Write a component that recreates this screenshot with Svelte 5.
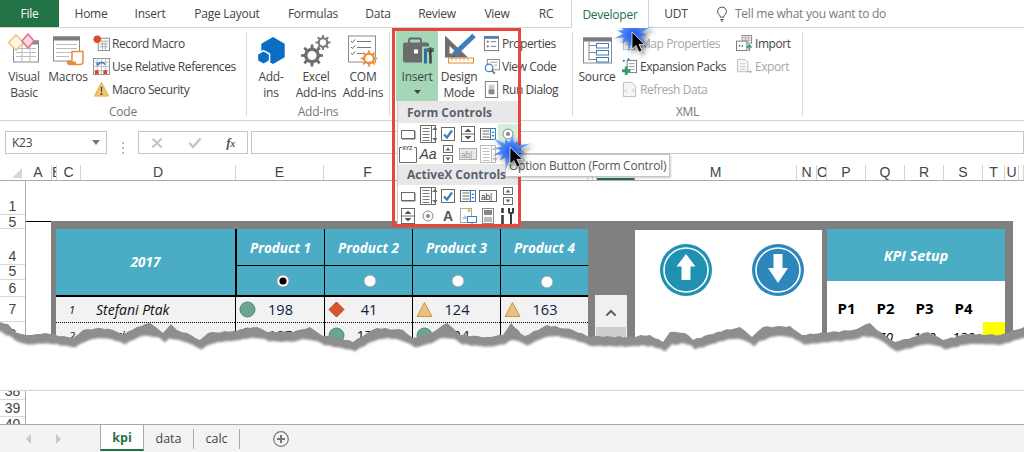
<script>
  const tabs = [
    ['Home', 64], ['Insert', 54], ['Page Layout', 100], ['Formulas', 72], ['Data', 58],
    ['Review', 60], ['View', 60], ['RC', 38]
  ];
  const cols = [
    ['A', 27], ['B', 5], ['C', 24], ['D', 155], ['E', 88], ['F', 88], ['G', 88], ['H', 88],
    ['', 5], ['', 4], ['', 38], ['M', 162], ['N', 20], ['O', 10], ['P', 39], ['Q', 39],
    ['R', 39], ['S', 39], ['T', 22], ['U', 14], ['', 5]
  ];
  const topRows = [
    ['1', 34, ''], ['5', 14, 'clip'], ['4', 36, ''], ['5', 15, ''], ['6', 17, 'mid'], ['7', 25, 'mid'], ['8', 26, 'mid']
  ];
  const radios = [
    { x: 4, y: 0, on: true }, { x: 3, y: 1, on: false }, { x: 2, y: 1, on: false }, { x: 5, y: 3, on: false }
  ];
  const data = [
    { n: 1, name: 'Stefani Ptak', v: [['c', 198], ['d', 41], ['t', 124], ['t', 163]] },
    { n: 2, name: 'Marisa Lopez', v: [['c', 195], ['c', 173], ['c', 224], ['c', 176]] }
  ];
  const kpi = [110, 70, 120, 120];

  function gear(cx, cy, r, teeth = 8, hole = 0.42) {
    const pts = [];
    const step = (Math.PI * 2) / teeth;
    for (let i = 0; i < teeth; i++) {
      const a = i * step;
      const ro = r, ri = r * 0.72, w = step * 0.2;
      [[a - w * 1.25, ri], [a - w * 0.75, ro], [a + w * 0.75, ro], [a + w * 1.25, ri]].forEach(([t, q]) => {
        pts.push(`${(cx + q * Math.cos(t)).toFixed(2)} ${(cy + q * Math.sin(t)).toFixed(2)}`);
      });
    }
    const h = r * hole;
    return `M${pts.join('L')}Z M${cx - h} ${cy}a${h} ${h} 0 1 0 ${h * 2} 0a${h} ${h} 0 1 0 ${-h * 2} 0Z`;
  }
  function hex(cx, cy, r) {
    const p = [];
    for (let i = 0; i < 6; i++) {
      const a = Math.PI / 6 + (i * Math.PI) / 3;
      p.push(`${(cx + r * Math.cos(a)).toFixed(2)},${(cy + r * Math.sin(a)).toFixed(2)}`);
    }
    return p.join(' ');
  }
  const spikes = [22, 9, 15, 9, 20, 9, 14, 9, 23, 9, 16, 9, 19, 9, 15, 9, 23, 9, 14, 9, 18, 9, 14, 9];
  const burst = spikes
    .map((r, i) => {
      const a = (i / spikes.length) * Math.PI * 2 - 0.35;
      return `${(26 + r * Math.cos(a)).toFixed(1)},${(26 + r * 0.85 * Math.sin(a)).toFixed(1)}`;
    })
    .join(' ');

  const edge = [[0,322],[8,324],[15,332],[26,335],[37,334],[45,333],[50,334],[73,338],[83,330],[100,328],[113,330],[123,335],[137,327],[150,323],[157,328],[163,333],[171,324],[177,330],[187,333],[200,340],[208,333],[233,331],[257,327],[267,332],[293,332],[310,327],[317,332],[323,336],[340,338],[353,342],[367,333],[377,328],[403,330],[413,338],[433,332],[447,323],[453,328],[460,335],[487,337],[503,335],[511,323],[517,330],[525,336],[547,325],[573,330],[587,336],[627,337],[650,335],[663,342],[670,332],[685,333],[693,340],[717,332],[740,327],[752,337],[763,327],[790,326],[802,335],[830,332],[853,330],[870,323],[877,330],[895,342],[913,337],[928,332],[943,340],[967,334],[1000,335],[1024,327]];
  const rough = [];
  edge.forEach(([x, y], i) => {
    rough.push([x, y]);
    const nxt = edge[i + 1];
    if (!nxt) return;
    const n = Math.floor((nxt[0] - x) / 4);
    for (let k = 1; k < n; k++) {
      const t = k / n;
      const j = Math.sin(x * 1.7 + k * 2.3) * 0.7;
      rough.push([x + (nxt[0] - x) * t, y + (nxt[1] - y) * t + j]);
    }
  });
  const topEdge = rough.map(([x, y]) => `${x.toFixed(1)},${(y - 320).toFixed(1)}`).join(' ');
  const shadowPts = `${topEdge} 1024,71 0,71`;
  const whitePts = rough
    .map(([x, y], i) => {
      const prev = rough[Math.max(0, i - 2)][1];
      const next = rough[Math.min(rough.length - 1, i + 2)][1];
      return `${(x + 2).toFixed(1)},${(Math.max(y, (prev + y + next) / 3) - 320 + 9.5).toFixed(1)}`;
    })
    .join(' ');
  const whiteShape = `-2,10 ${whitePts} 1026,14 1026,71 -2,71`;
</script>

{#snippet tri(x, y, up, c = '#666')}
  <path d={up ? `M${x} ${y + 3}l3 -3l3 3z` : `M${x} ${y}h6l-3 3z`} fill={c} />
{/snippet}
{#snippet btnIcon()}
  <svg viewBox="0 0 18 18"><rect x="2.500" y="5.500" width="13" height="8" fill="#fff" stroke="#6a6a6a" /><path d="M3 14h13V6" fill="none" stroke="#6a6a6a" /></svg>
{/snippet}
{#snippet comboIcon(c = '#6a6a6a')}
  <svg viewBox="0 0 18 18"><rect x="1.500" y="0.500" width="15" height="17" fill="#fff" stroke={c} /><path d="M12.500 1v16" stroke={c} /><path d="M3.500 3.500h7M3.500 6.500h7M3.500 9.500h7M3.500 12.500h7M3.500 15.500h7" stroke={c} stroke-width="0.900" />{@render tri(13, 2, true, c)}{@render tri(13, 13, false, c)}</svg>
{/snippet}
{#snippet checkIcon()}
  <svg viewBox="0 0 18 18"><rect x="2.500" y="2.500" width="13" height="13" fill="#fff" stroke="#6a6a6a" /><path d="M5 9.500l3 3 5-7" fill="none" stroke="#3f7dba" stroke-width="2.200" /></svg>
{/snippet}
{#snippet spinIcon()}
  <svg viewBox="0 0 18 18"><rect x="2.500" y="1.500" width="13" height="15" fill="#fff" stroke="#6a6a6a" /><path d="M3 9h12" stroke="#6a6a6a" /><path d="M5.500 7l3.500-3.500L12.500 7zM5.500 11l3.500 3.500L12.500 11z" fill="#555" /></svg>
{/snippet}
{#snippet listIcon()}
  <svg viewBox="0 0 18 18"><rect x="1.500" y="3.500" width="15" height="11" fill="#fff" stroke="#6a6a6a" /><path d="M3.500 6h7M3.500 9h7M3.500 12h7" stroke="#6a6a6a" /><rect x="11.500" y="3.500" width="5" height="11" fill="#fff" stroke="#3f7dba" /><path d="M12.500 8l1.500-2 1.500 2zM12.500 10l1.500 2 1.500-2z" fill="#3f7dba" /></svg>
{/snippet}
{#snippet optIcon(c = '#8a8a8a')}
  <svg viewBox="0 0 18 18"><circle cx="9" cy="9" r="5" fill="#fff" stroke={c} /><circle cx="9" cy="9" r="2" fill={c} /></svg>
{/snippet}
{#snippet scrollIcon()}
  <svg viewBox="0 0 18 18"><rect x="4.500" y="0.500" width="9" height="7" fill="#fff" stroke="#6a6a6a" /><rect x="4.500" y="10.500" width="9" height="7" fill="#fff" stroke="#6a6a6a" /><path d="M6.500 5.500l2.500-3 2.500 3zM6.500 12.500l2.500 3 2.500-3z" fill="#666" /></svg>
{/snippet}
{#snippet abIcon(dim)}
  <svg viewBox="0 0 18 18"><rect x="0.500" y="3.500" width="17" height="11" fill={dim ? '#e8e8e8' : '#fff'} stroke={dim ? '#aaa' : '#6a6a6a'} /><text x="2" y="12.500" class="ab" fill={dim ? '#999' : '#333'}>ab|</text></svg>
{/snippet}

<div class="page">
  <nav class="tabs">
    <div class="tab file">File</div>
    {#each tabs as [label, w]}
      <div class="tab" style="width:{w}px">{label}</div>
    {/each}
    <div class="tab dev">Developer</div>
    <div class="tab udt">UDT</div>
    <div class="tell">
      <svg width="12" height="16" viewBox="0 0 12 16"><path d="M6 1a4.500 4.500 0 0 0-2.500 8.200c.6.500.8 1 .9 2h3.200c.1-1 .3-1.500.9-2A4.500 4.500 0 0 0 6 1zM4.300 13.500h3.400M4.800 15h2.400" fill="none" stroke="#555" /></svg>
      <span>Tell me what you want to do</span>
    </div>
  </nav>

  <section class="ribbon">
    <div class="group g-code">
      <div class="btns">
        <div class="big w48">
          <svg class="ico" viewBox="0 0 40 36">
            <rect x="9.500" y="8.500" width="25" height="21" fill="#fff" stroke="#8a8a8a" />
            <rect x="9" y="8" width="26" height="4" fill="#8a8a8a" />
            <path d="M12 16h20M12 20h20M12 24h20M18 12v17M26 12v17" stroke="#bcbcbc" />
            <path d="M12 2.500l7.500 7.500-7.500 7.500L4.500 10z" fill="#fff7e6" stroke="#efc67f" stroke-width="1.600" />
            <path d="M24 1.500l6 7-6 7-6-7z" fill="#fbdbe0" stroke="#e4738a" stroke-width="1.600" />
          </svg>
          <span>Visual</span><span>Basic</span>
        </div>
        <div class="big w40">
          <svg class="ico" viewBox="0 0 40 36">
            <rect x="5.500" y="4.500" width="26" height="24" fill="#fff" stroke="#8a8a8a" />
            <rect x="5" y="4" width="27" height="4" fill="#7c7c7c" />
            <path d="M8 12h21M8 16h21M8 20h21M8 24h13" stroke="#bdbdbd" />
            <path d="M24 19h11v10c0 2-1.500 3-3 3H22c-2 0-2.500-2-2.500-3H24z" fill="#fff" stroke="#e58b3d" stroke-width="1.500" />
            <path d="M20 29h8v3h-6c-1 0-2-1-2-3z" fill="#e58b3d" />
          </svg>
          <span>Macros</span>
        </div>
        <div class="smalls s-code">
          <div class="item">
            <svg viewBox="0 0 18 18"><rect x="5.500" y="3.500" width="12" height="13" fill="#fff" stroke="#888" /><path d="M5 6.500h13M7 9.500h9M7 12.500h9M10 7v9M13 7v9" stroke="#aaa" /><circle cx="4.500" cy="4.500" r="4" fill="#d6502b" /></svg>
            <span>Record Macro</span>
          </div>
          <div class="item">
            <svg viewBox="0 0 18 18"><rect x="0.500" y="0.500" width="17" height="17" fill="#fff" stroke="#888" /><path d="M0 4.500h18M0 9h18M0 13.500h18M4.500 0v18M9 0v18M13.500 0v18" stroke="#bbb" /><path d="M5 7c2-3 6-3 8 0" fill="none" stroke="#3f7dba" stroke-width="1.600" /><path d="M3.500 4.500l.5 4 3.500-1.500z" fill="#3f7dba" /><rect x="2" y="13" width="4" height="4" fill="#cf4a2c" /><rect x="11" y="13" width="4" height="4" fill="#cf4a2c" /></svg>
            <span>Use Relative References</span>
          </div>
          <div class="item">
            <svg viewBox="0 0 18 18"><path d="M9 1.500L16.500 16h-15z" fill="#f2c36b" stroke="#e6a84a" /><path d="M8.200 6h1.600l-.3 6h-1zM8.100 13h1.800v1.800H8.100z" fill="#444" /></svg>
            <span>Macro Security</span>
          </div>
        </div>
      </div>
      <div class="glabel">Code</div>
    </div>

    <div class="group g-add">
      <div class="btns">
        <div class="big w48">
          <svg class="ico" viewBox="0 0 40 36">
            <polygon points={hex(22, 18, 13.500)} fill="#0b6cc4" />
            <polygon points={hex(12.500, 25, 7)} fill="#0b6cc4" stroke="#fff" stroke-width="1.500" />
          </svg>
          <span>Add-</span><span>ins</span>
        </div>
        <div class="big w42">
          <svg class="ico" viewBox="0 0 40 36">
            <path d={gear(16, 23, 11)} fill="#6e6e6e" fill-rule="evenodd" />
            <path d={gear(27, 10, 7.500)} fill="#7a7a7a" fill-rule="evenodd" />
          </svg>
          <span>Excel</span><span>Add-ins</span>
        </div>
        <div class="big w52">
          <svg class="ico" viewBox="0 0 40 36">
            <rect x="5.500" y="3.500" width="27" height="26" fill="#fff" stroke="#8a8a8a" />
            <path d="M8 8.500l1.500 1.500 2.500-3M8 14.500l1.500 1.500 2.500-3M8 20.500l1.500 1.500 2.500-3" fill="none" stroke="#666" />
            <path d="M14 9h14M14 15h14M14 21h7" stroke="#777" />
            <path d={gear(26, 26, 8.500)} fill="#e88a2d" fill-rule="evenodd" stroke="#fff" stroke-width="0.500" />
          </svg>
          <span>COM</span><span>Add-ins</span>
        </div>
      </div>
      <div class="glabel">Add-ins</div>
    </div>

    <div class="group g-ctl">
      <div class="btns">
        <div class="big w42 active">
          <svg class="ico" viewBox="0 0 40 36">
            <path d="M12 11V7.500c0-1 .5-1.500 1.500-1.500h9c1 0 1.500.5 1.500 1.500V11" fill="none" stroke="#666" stroke-width="1.800" />
            <rect x="6" y="10" width="26" height="20" rx="2" fill="#6b6b6b" />
            <rect x="17" y="17" width="4" height="4" fill="#fff" />
            <rect x="25" y="14" width="11" height="20" fill="#a3d7b5" />
            <path d="M28.500 16v5M28.500 21v10" stroke="#2a6fa8" stroke-width="3" />
            <path d="M33.500 15v5c0 1-.5 1.500-1 2M33.500 22v9" fill="none" stroke="#3d3d3d" stroke-width="2.400" />
            <path d="M31 15.500v3h5v-3" fill="none" stroke="#3d3d3d" stroke-width="1.300" />
          </svg>
          <span>Insert</span>
          <svg class="caret" width="7" height="4" viewBox="0 0 7 4"><path d="M0 0h7L3.500 4z" fill="#444" /></svg>
        </div>
        <div class="big w42">
          <svg class="ico" viewBox="0 0 40 36">
            <path d="M6 3l23 22H6z M10.500 13.500V21h8z" fill="#6f6f6f" fill-rule="evenodd" />
            <path d="M35 3L15 22" stroke="#3f7fb7" stroke-width="5" />
            <path d="M15 22l-2.500 3 3.500-.8" fill="#555" />
            <rect x="9.500" y="25.500" width="25" height="5" fill="#fff" stroke="#e38b33" />
            <path d="M13 26v2M17 26v2M21 26v2M25 26v2M29 26v2" stroke="#e38b33" />
          </svg>
          <span>Design</span><span>Mode</span>
        </div>
        <div class="smalls s-ctl">
          <div class="item">
            <svg viewBox="0 0 18 18"><rect x="1.500" y="1.500" width="15" height="15" fill="#fff" stroke="#777" /><path d="M1.500 3h15" stroke="#3f7dba" stroke-width="2" /><rect x="4" y="6" width="2" height="2" fill="#777" /><rect x="4" y="11" width="2" height="2" fill="#777" /><path d="M8 7h6M8 12h6" stroke="#777" /></svg>
            <span>Properties</span>
          </div>
          <div class="item">
            <svg viewBox="0 0 18 18"><rect x="4.500" y="1.500" width="13" height="11" fill="#fff" stroke="#888" /><path d="M8 4.500h7M12 7.500h3" stroke="#999" /><circle cx="6.500" cy="10.500" r="4" fill="#fff" stroke="#3f7dba" stroke-width="1.300" /><path d="M9.500 13.500l3 3" stroke="#666" stroke-width="1.800" /></svg>
            <span>View Code</span>
          </div>
          <div class="item">
            <svg viewBox="0 0 18 18"><rect x="2.500" y="0.500" width="13" height="17" fill="#fff" stroke="#777" /><rect x="6" y="4" width="6" height="10" fill="#ccc" /><rect x="6" y="9" width="6" height="5" fill="#888" /></svg>
            <span>Run Dialog</span>
          </div>
        </div>
      </div>
      <div class="glabel"> </div>
    </div>

    <div class="group g-xml">
      <div class="btns">
        <div class="big w48">
          <svg class="ico" viewBox="0 0 40 36">
            <rect x="6.500" y="5.500" width="28" height="25" fill="#fff" stroke="#8a8a8a" />
            <rect x="6" y="5" width="29" height="4" fill="#7c7c7c" />
            <path d="M12 9v19M12 13h7M12 20h7M12 27h7" stroke="#8a8a8a" />
            <rect x="19.500" y="11" width="12" height="4.500" fill="#fff" stroke="#3f7dba" />
            <rect x="19.500" y="18" width="12" height="4.500" fill="#fff" stroke="#3f7dba" />
            <rect x="19.500" y="25" width="12" height="4.500" fill="#fff" stroke="#3f7dba" />
          </svg>
          <span>Source</span>
        </div>
        <div class="smalls s-xml1">
          <div class="item dim">
            <svg viewBox="0 0 18 18"><rect x="2.500" y="3.500" width="12" height="12" fill="#eee" stroke="#bbb" /><path d="M5 7h7M5 10h7" stroke="#bbb" /></svg>
            <span>Map Properties</span>
          </div>
          <div class="item">
            <svg viewBox="0 0 18 18"><rect x="6.500" y="2.500" width="10" height="13" fill="#fff" stroke="#777" /><path d="M8.500 6h6M8.500 9h6M8.500 12h6" stroke="#999" /><circle cx="3" cy="3" r="1.200" fill="#3f7dba" /><circle cx="8" cy="1.500" r="1.200" fill="#3f7dba" /><path d="M4 9h3v3h3v3H7v3H4v-3H1v-3h3z" fill="#3a9a6a" /></svg>
            <span>Expansion Packs</span>
          </div>
          <div class="item dim">
            <svg viewBox="0 0 18 18"><path d="M2.500 1.500h9l4 4v11h-13z" fill="#f5f5f5" stroke="#bbb" /><path d="M6 8l-2 2 2 2M12 8l2 2-2 2" fill="none" stroke="#bbb" /></svg>
            <span>Refresh Data</span>
          </div>
        </div>
        <div class="smalls">
          <div class="item">
            <svg viewBox="0 0 18 18"><rect x="6.500" y="0.500" width="10" height="8" fill="#fff" stroke="#888" /><path d="M7 3h9M7 5.500h9M10 1v7M13 1v7" stroke="#aaa" /><rect x="0.500" y="6.500" width="11" height="10" fill="#fff" stroke="#777" /><path d="M3 11.500h1.500M6 11.500h1.500" stroke="#3f7dba" stroke-width="2" /><path d="M14 17v-5M11.500 13.500l2.500-3 2.500 3" fill="none" stroke="#3a9a6a" stroke-width="1.500" /></svg>
            <span>Import</span>
          </div>
          <div class="item dim">
            <svg viewBox="0 0 18 18"><path d="M1.500 1.500h8l3 3v10h-11z" fill="#f7f7f7" stroke="#bbb" /><path d="M4 6h6M4 9h6M4 12h6" stroke="#ccc" /><path d="M11 14.500h5M14.500 13l2 1.500-2 1.500" fill="none" stroke="#aaa" /></svg>
            <span>Export</span>
          </div>
        </div>
      </div>
      <div class="glabel">XML</div>
    </div>
  </section>

  <section class="formula">
    <div class="namebox"><span>K23</span><i class="nb-caret"></i></div>
    <div class="dots"><i></i><i></i><i></i></div>
    <div class="fxbox">
      <svg width="12" height="12" viewBox="0 0 12 12"><path d="M1.500 1.500l9 9M10.500 1.500l-9 9" stroke="#c4c4c4" stroke-width="2" /></svg>
      <svg width="14" height="12" viewBox="0 0 14 12"><path d="M1.500 6l3.500 4 7.500-8.500" fill="none" stroke="#c4c4c4" stroke-width="2.400" /></svg>
      <span class="fx">f<sub>x</sub></span>
    </div>
    <div class="input"></div>
  </section>

  <section class="sheet">
    <div class="colheads">
      <div class="corner"><svg width="10" height="10" viewBox="0 0 10 10"><path d="M10 0v10H0z" fill="#d6d6d6" /></svg></div>
      {#each cols as [l, w], i}
        <div class="colhead" class:cur={i === 10} style="width:{w}px">{l}</div>
      {/each}
    </div>
    <div class="body">
      <div class="rowheads">
        {#each topRows as [l, h, kind]}
          <div class="rowhead {kind}" style="height:{h}px">{l}</div>
        {/each}
        <div class="spacer"></div>
        <div class="rowhead plain">38</div>
        <div class="rowhead plain">39</div>
        <div class="rowhead last">40</div>
      </div>
      <div class="cells">
        <div class="a-cell"></div>
        <div class="frame">
          <div class="table">
            <div class="th year">2017</div>
            {#each [1, 2, 3, 4] as p, i}
              <div class="th prod" class:first={i === 0}>Product {p}</div>
            {/each}
            {#each radios as r, i}
              <div class="th radio" class:first={i === 0}>
                <svg width="14" height="14" viewBox="0 0 14 14" style="margin-left:{r.x}px;margin-top:{r.y}px">
                  {#if r.on}
                    <circle cx="7" cy="7" r="6" fill="#fff" stroke="#999" stroke-width="0.800" />
                    <circle cx="7" cy="7" r="3.600" fill="#000" />
                  {:else}
                    <circle cx="7" cy="7" r="5.800" fill="#fff" stroke="#aaa" stroke-width="0.800" />
                  {/if}
                </svg>
              </div>
            {/each}
            {#each data as row}
              <div class="td namecell"><em class="num">{row.n}</em><em class="nm">{row.name}</em></div>
              {#each row.v as [k, val]}
                <div class="td val">
                  <svg width="17" height="17" viewBox="0 0 17 17">
                    {#if k === 'c'}
                      <circle cx="8.500" cy="8.500" r="7.500" fill="#6aa68f" stroke="#4f8a74" />
                    {:else if k === 'd'}
                      <path d="M8.500 1l7.500 7.500-7.500 7.500L1 8.500z" fill="#d4552f" stroke="#b8431f" stroke-linejoin="round" />
                    {:else}
                      <path d="M8.500 1.500L16 15.500H1z" fill="#e9c07f" stroke="#c9983f" stroke-linejoin="round" />
                    {/if}
                  </svg>
                  <span>{val}</span>
                </div>
              {/each}
            {/each}
          </div>
          <div class="scroll">
            <svg width="12" height="8" viewBox="0 0 12 8"><path d="M1 7l5-5 5 5" fill="none" stroke="#606060" stroke-width="2.200" /></svg>
            <div class="thumb"></div>
          </div>
          <div class="arrows">
            <svg width="56" height="56" viewBox="0 0 56 56">
              <circle cx="28" cy="28" r="26" fill="#2191b2" />
              <circle cx="28" cy="28" r="22" fill="none" stroke="#fff" stroke-width="1.600" />
              <path d="M28 12l9.500 12.500H32.500V38h-9V24.500h-5z" fill="#fff" />
            </svg>
            <svg width="56" height="56" viewBox="0 0 56 56">
              <circle cx="28" cy="28" r="26" fill="#2d87bc" />
              <circle cx="28" cy="28" r="22" fill="none" stroke="#fff" stroke-width="1.600" />
              <path d="M23.500 12h9v14H38L28 41 18 26h5.500z" fill="#fff" />
            </svg>
          </div>
          <div class="kpi">
            <div class="kpi-head">KPI Setup</div>
            <div class="kpi-grid">
              {#each [1, 2, 3, 4] as p}<b>P{p}</b>{/each}
              <i class="blank"></i>
              {#each kpi as k}<em>{k}</em>{/each}
              <i class="yellow"></i>
            </div>
          </div>
        </div>
      </div>
    </div>
  </section>

  <footer class="sheets">
    <svg class="nav" width="40" height="12" viewBox="0 0 40 12"><path d="M5 1v10L0 6zM30 1v10l5-5z" fill="#c8c8c8" /></svg>
    <div class="stab on">kpi</div>
    <div class="stab data">data</div>
    <div class="stab calc">calc</div>
    <svg class="plus" width="18" height="18" viewBox="0 0 18 18"><circle cx="9" cy="9" r="7.300" fill="none" stroke="#777" stroke-width="1.200" /><path d="M9 5v8M5 9h8" stroke="#777" stroke-width="2" /></svg>
  </footer>

  <svg class="tear" width="1024" height="71" viewBox="0 0 1024 71">
    <defs>
      <filter id="soft" x="-2%" y="-20%" width="104%" height="140%"><feGaussianBlur stdDeviation="1" /></filter>
    </defs>
    <polygon points={shadowPts} fill="#8e8e8e" />
    <polygon points={whiteShape} fill="#fff" filter="url(#soft)" />
  </svg>

  <div class="menu">
    <div class="mhead">Form Controls</div>
    <div class="mgrid">
      {@render btnIcon()}
      {@render comboIcon()}
      {@render checkIcon()}
      {@render spinIcon()}
      {@render listIcon()}
      <div class="hot">{@render optIcon()}</div>
      <svg viewBox="0 0 18 18"><path d="M3 2.500H.5v15h17v-15H15" fill="none" stroke="#6a6a6a" /><text x="3.200" y="5" class="xyz">XYZ</text></svg>
      <span class="aa">Aa</span>
      {@render scrollIcon()}
      {@render abIcon(true)}
      {@render comboIcon('#bbb')}
      <span></span>
    </div>
    <div class="mhead two">ActiveX Controls</div>
    <div class="mgrid">
      {@render btnIcon()}
      {@render comboIcon()}
      {@render checkIcon()}
      {@render listIcon()}
      {@render abIcon(false)}
      {@render scrollIcon()}
      {@render spinIcon()}
      {@render optIcon()}
      <span class="a-big">A</span>
      <svg viewBox="0 0 18 18"><rect x="1.500" y="1.500" width="11" height="14" fill="#fff" stroke="#aaa" /><path d="M3 12l3-4 3 4z" fill="#a9cbe6" /><circle cx="10" cy="3.500" r="1.500" fill="#f0b040" /><rect x="8.500" y="9.500" width="9" height="6" fill="#fff" stroke="#3f7dba" /><path d="M13 16v2M10.500 17.500h5" stroke="#3f7dba" /></svg>
      <svg viewBox="0 0 18 18"><rect x="3.500" y="1.500" width="11" height="15" fill="#fff" stroke="#888" /><rect x="5" y="3" width="8" height="5" fill="#888" /><rect x="5" y="10" width="8" height="5" fill="#bbb" /></svg>
      <svg viewBox="0 0 18 18"><path d="M3.500 1v5M3.500 8v10" stroke="#3a3a3a" stroke-width="2.600" /><path d="M10 1v4c0 1.500 4 1.500 4 0V1M12 6v12" fill="none" stroke="#3a3a3a" stroke-width="2" /><path d="M15.500 16.500h2" stroke="#888" stroke-dasharray="1 1" /></svg>
    </div>
  </div>
  <div class="redbox"></div>

  <div class="tooltip">Option Button (Form Control)</div>

  <svg class="burst one" width="52" height="52" viewBox="0 0 52 52">
    <defs>
      <radialGradient id="bl"><stop offset="0.200" stop-color="#2e63f2" /><stop offset="1" stop-color="#6fb2ff" /></radialGradient>
    </defs>
    <polygon points={burst} fill="url(#bl)" />
    <path d="M26 25v17l4-3.500 3 6.500 3-1.300-3-6.300h5.500z" fill="#000" stroke="#fff" stroke-width="0.700" />
  </svg>
  <svg class="burst two" width="52" height="52" viewBox="0 0 52 52">
    <polygon points={burst} fill="url(#bl)" />
    <path d="M26 23v17l4-3.500 3 6.500 3-1.300-3-6.300h5.500z" fill="#000" stroke="#fff" stroke-width="0.700" />
  </svg>
</div>

<style>
  :global(body) { margin: 0; background: #fff; }
  .page {
    position: relative; width: 1024px; height: 452px; overflow: hidden; background: #fff;
    display: flex; flex-direction: column;
    font-family: "Open Sans", "Liberation Sans", sans-serif; font-size: 12px; color: #444;
    letter-spacing: -0.25px;
  }
  .tabs { display: flex; height: 27px; border-bottom: 1px solid #d4d4d4; flex: none; }
  .tab { display: flex; align-items: center; justify-content: center; height: 27px; font-size: 12px; }
  .file { width: 59px; background: #217346; color: #fff; }
  .dev {
    width: 78px; margin-left: 6px; height: 28px; box-sizing: border-box; background: #fff; color: #217346;
    border: 1px solid #d4d4d4; border-width: 0 1px; z-index: 1;
  }
  .udt { width: 54px; }
  .tell { display: flex; align-items: center; gap: 7px; margin-left: 13px; color: #7a7a7a; }

  .ribbon { display: flex; height: 92px; border-bottom: 1px solid #d4d4d4; flex: none; box-sizing: content-box; }
  .group { display: flex; flex-direction: column; height: 84px; margin-top: 4px; box-sizing: border-box; border-right: 1px solid #d9d9d9; }
  .g-code { width: 247px; }
  .g-add { width: 143px; }
  .g-ctl { width: 183px; padding-left: 6px; box-sizing: border-box; }
  .g-xml { width: 230px; }
  .btns { display: flex; height: 72px; flex: none; }
  .glabel { height: 16px; line-height: 16px; text-align: center; color: #777; flex: none; }
  .big { display: flex; flex-direction: column; align-items: center; flex: none; line-height: 16px; }
  .big span { display: block; }
  .ico { width: 40px; height: 37px; flex: none; display: block; }
  .w40 { width: 40px; } .w42 { width: 42px; } .w48 { width: 48px; } .w52 { width: 52px; }
  .active { background: #a3d7b5; height: 70px; margin-top: -1px; padding-top: 1px; box-sizing: border-box; }
  .caret { margin-top: 5px; }
  .smalls { display: flex; flex-direction: column; }
  .s-code { margin-left: 5px; }
  .s-ctl { margin-left: 3px; }
  .s-xml1 { margin-left: 0; width: 115px; }
  .item { display: flex; align-items: center; gap: 2px; height: 23px; white-space: nowrap; letter-spacing: -0.42px; }
  .item svg { width: 17px; height: 17px; flex: none; }
  .dim { color: #a6a6a6; }

  .formula { display: flex; height: 44px; padding: 10px 0 0 5px; box-sizing: border-box; flex: none; }
  .namebox, .fxbox, .input { height: 23px; box-sizing: border-box; border: 1px solid #c6c6c6; }
  .namebox { width: 102px; display: flex; align-items: center; justify-content: space-between; padding: 0 6px; color: #444; }
  .nb-caret { width: 0; height: 0; border: 4px solid transparent; border-top: 5px solid #777; border-bottom: 0; }
  .dots { width: 31px; display: flex; flex-direction: column; align-items: center; justify-content: center; gap: 3px; }
  .dots i { width: 2px; height: 2px; background: #bbb; display: block; }
  .fxbox { width: 110px; display: flex; align-items: center; justify-content: space-between; padding: 0 12px; }
  .fx { font-family: "Liberation Serif", serif; font-style: italic; font-weight: 700; font-size: 13px; color: #555; }
  .fx sub { font-size: 10px; vertical-align: baseline; }
  .input { flex: 1; margin-left: 3px; }

  .sheet { display: flex; flex-direction: column; height: 259px; flex: none; overflow: hidden; }
  .colheads { display: flex; height: 16px; flex: none; box-sizing: border-box; border-bottom: 1px solid #ababab; }
  .corner { width: 25px; flex: none; display: flex; align-items: flex-end; justify-content: flex-end; padding: 0 3px 2px 0; box-sizing: border-box; }
  .colhead {
    flex: none; box-sizing: border-box; border-right: 1px solid #d4d4d4; overflow: hidden; text-align: center;
    font-family: "Liberation Sans", sans-serif; font-size: 14px; line-height: 14px; letter-spacing: 0; color: #444;
  }
  .cur { border-bottom: 2px solid #217346; }
  .body { display: flex; flex: 1; min-height: 0; }
  .rowheads { width: 26px; flex: none; box-sizing: border-box; border-right: 1px solid #ababab; display: flex; flex-direction: column; height: 243px; }
  .rowhead {
    flex: none; box-sizing: border-box; border-bottom: 1px solid #d8d8d8; display: flex; align-items: flex-end; justify-content: center;
    font-family: "Liberation Sans", sans-serif; font-size: 14px; line-height: 15px; letter-spacing: 0; color: #444; overflow: hidden;
  }
  .mid { align-items: center; }
  .clip { align-items: flex-start; }
  .plain { height: 17px; }
  .last { height: 7px; border-bottom: 0; align-items: flex-start; }
  .spacer { flex: 1; }
  .cells { flex: 1; display: flex; margin-top: 40px; min-width: 0; height: 165px; }
  .a-cell { width: 25px; flex: none; border-top: 1px solid #000; box-sizing: border-box; }
  .frame { width: 962px; flex: none; background: #808080; display: flex; align-items: flex-start; padding: 8px 8px 0 5px; box-sizing: border-box; height: 165px; overflow: hidden; }
  .table {
    display: grid; grid-template-columns: 179px 89px 88px 88px 88px; grid-template-rows: 37px 31px 26px 26px;
    width: 532px; flex: none;
  }
  .th { background: #4bacc6; color: #fff; font-weight: 700; font-style: italic; display: flex; align-items: center; justify-content: center; font-size: 13.500px; letter-spacing: 0; box-sizing: border-box; border-left: 1px solid #000; }
  .th.first { border-left-width: 2px; }
  .year { grid-row: span 2; border-left: 0; border-bottom: 2px solid #000; }
  .prod { border-bottom: 1px solid #000; padding-top: 2px; }
  .radio { border-bottom: 2px solid #000; }
  .td { background: #f2f2f2; box-sizing: border-box; border-bottom: 1px dotted #000; height: 26px; }
  .namecell { display: flex; align-items: center; color: #111; font-size: 14px; letter-spacing: 0; }
  .num { width: 40px; flex: none; text-align: right; padding-right: 21px; box-sizing: border-box; font-size: 11px; }
  .nm { white-space: nowrap; }
  .val { display: grid; grid-template-columns: 1fr auto 1fr; align-items: center; border-left: 1px solid #000; padding-left: 3px; font-size: 14.500px; letter-spacing: 0; color: #10203f; }
  .val svg { display: block; }
  .val span { padding-right: 2px; }
  .scroll { width: 32px; margin: 66px 0 0 7px; height: 60px; background: #f0f0f0; flex: none; display: flex; flex-direction: column; align-items: center; box-sizing: border-box; padding-top: 14px; }
  .thumb { width: 30px; height: 30px; margin-top: 10px; background: #cdcdcd; }
  .arrows { width: 187px; height: 140px; margin: 1px 0 0 8px; background: #fff; flex: none; display: flex; justify-content: center; gap: 36px; padding: 12px 0 0 6px; box-sizing: border-box; }
  .kpi { width: 178px; height: 140px; margin-left: 5px; background: #fff; flex: none; }
  .kpi-head { height: 52px; background: #4bacc6; color: #fff; font-weight: 700; font-style: italic; display: flex; align-items: center; justify-content: center; font-size: 14.300px; letter-spacing: 0; }
  .kpi-grid { display: grid; grid-template-columns: repeat(4, 39px) 22px; grid-auto-rows: 24px; padding-top: 17px; text-align: center; color: #000; font-size: 15px; letter-spacing: 0; }
  .kpi-grid em { font-size: 13.500px; align-self: end; line-height: 18px; }
  .blank { display: block; }
  .yellow { display: block; background: #ff0; }

  .sheets { display: flex; align-items: center; height: 28px; flex: none; box-sizing: border-box; background: #f3f3f3; border-top: 1px solid #a8a8a8; position: relative; }
  .nav { margin-left: 26px; width: 40px; flex: none; }
  .stab { height: 24px; display: flex; align-items: center; justify-content: center; box-sizing: border-box; flex: none; font-size: 12.500px; letter-spacing: 0; }
  .stab.on { width: 44px; margin-left: 34px; background: #fff; color: #217346; font-weight: 700; border: 1px solid #a8a8a8; border-width: 0 1px; border-bottom: 2px solid #217346; height: 26px; margin-top: 0; align-self: flex-start; }
  .data { width: 50px; border-right: 1px solid #a8a8a8; height: 20px; }
  .calc { width: 46px; border-right: 1px solid #a8a8a8; height: 20px; }
  .plus { margin-left: 32px; }

  .tear { position: absolute; left: 0; top: 320px; }

  .menu { position: absolute; left: 397px; top: 101px; width: 122px; height: 124px; background: #fff; box-sizing: border-box; border-left: 1px solid #ccc; overflow: hidden; }
  .mhead { height: 22px; background: #e8e8e8; font-weight: 700; font-size: 12px; letter-spacing: 0; color: #5a6272; padding-left: 9px; display: flex; align-items: center; }
  .mhead.two { height: 21px; }
  .mgrid { display: grid; grid-template-columns: repeat(6, 20px); grid-auto-rows: 20px; place-items: center; padding-top: 1px; }
  .mgrid svg { width: 18px; height: 18px; display: block; }
  .hot { width: 20px; height: 21px; background: #d3eedb; display: flex; align-items: center; justify-content: center; }
  .aa { font-style: italic; font-size: 14px; color: #444; font-family: "Liberation Sans", sans-serif; letter-spacing: 0; }
  .a-big { font-weight: 700; font-size: 14px; color: #555; font-family: "Liberation Sans", sans-serif; letter-spacing: 0; }
  .ab { font: 8.500px "Liberation Sans", sans-serif; }
  .xyz { font: 700 5.500px "Liberation Sans", sans-serif; fill: #555; }
  .redbox { position: absolute; left: 392px; top: 28px; width: 129px; height: 199px; box-sizing: border-box; border: 3.500px solid #e8453c; }

  .tooltip {
    position: absolute; left: 505px; top: 154px; width: 165px; height: 23px; box-sizing: border-box; background: #fff;
    border: 1px solid #c4c4c4; box-shadow: 1px 1px 2px rgba(0, 0, 0, .2); color: #575757; line-height: 21px; padding-left: 3px; white-space: nowrap;
  }
  .burst { position: absolute; filter: drop-shadow(3px 3px 2px rgba(0, 0, 0, .45)); }
  .burst.one { left: 606px; top: 7px; }
  .burst.two { left: 484px; top: 124px; }
</style>
